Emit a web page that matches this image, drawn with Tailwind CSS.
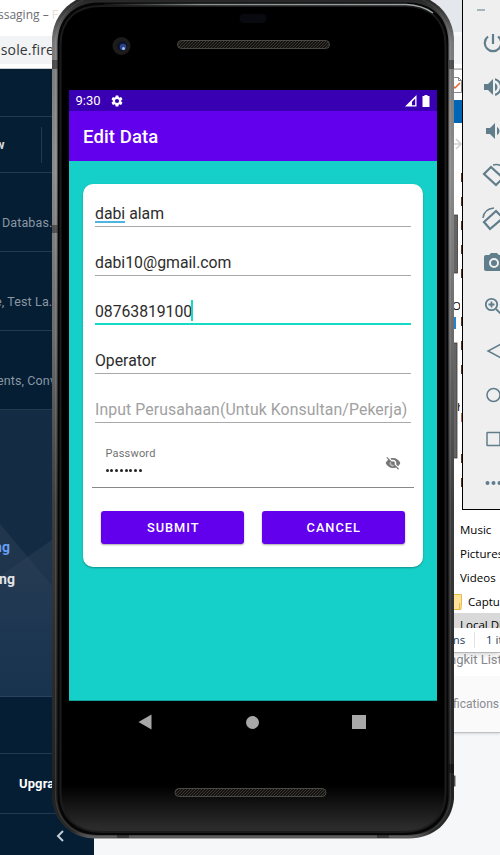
<!DOCTYPE html>
<html lang="id">
<head>
<meta charset="utf-8">
<title>Edit Data</title>
<script src="https://cdn.jsdelivr.net/npm/@tailwindcss/browser@4"></script>
</head>
<body class="w-[500px] h-[855px] overflow-hidden">
<main class="relative w-[500px] h-[855px] overflow-hidden bg-[#f6f7f9] font-['Roboto',sans-serif]">

  <!-- Browser window -->
  <section class="absolute inset-0 flex flex-col">
    <div class="h-9 flex">
      <div class="w-[80px] flex items-center bg-white text-[12px] text-[#6b6e73] font-['Open_Sans',sans-serif] whitespace-nowrap overflow-hidden"><span class="-ml-[2px] -mt-[6px]">ssaging – <span class="text-[#e6dcd6]">F</span></span></div>
      <div class="flex-1 h-8 bg-[#e4e7eb]"></div>
    </div>
    <div class="h-7 bg-[#f1f3f4] flex items-center text-[14px] text-[#35363a] font-['Open_Sans',sans-serif] overflow-hidden"><span class="-ml-[8px] -mt-px tracking-[.15px]">nsole.firebase</span></div>
    <div class="h-[5px] bg-white border-b border-[#c8cacc]"></div>
    <div class="flex-1 flex min-h-0">
      <aside class="w-[94px] flex flex-col bg-[#051e34] text-[12.500px] tracking-[.12px] text-[#8a97a3] whitespace-nowrap overflow-hidden">
        <div class="h-[48px] border-b border-[#23394d]"></div>
        <div class="h-[56px] flex items-center border-b border-[#23394d]"><span class="w-[41px] text-[13px] font-bold text-[#d5d9dd]"><span class="-ml-[5px]">w</span></span><span class="h-9 w-px bg-[#23394d]"></span></div>
        <div class="h-[79px] flex items-end pb-[18px] border-b border-[#23394d]"><span class="ml-[2px]">Databas…</span></div>
        <div class="h-[79px] flex items-end pb-[18px] border-b border-[#23394d]"><span class="-ml-[5px]">e, Test La…</span></div>
        <div class="h-[79px] flex items-end pb-[18px] border-b border-[#23394d]"><span class="-ml-[3px]">ents, Conversions</span></div>
        <div class="h-[287px] relative border-b border-[#2c455b] bg-[#142c43]">
          <svg class="absolute inset-0" width="94" height="287"><defs><linearGradient id="fade" x1="0" y1="110" x2="0" y2="287" gradientUnits="userSpaceOnUse"><stop offset="0" stop-color="#3c4c60" stop-opacity=".34"/><stop offset=".5" stop-color="#2c4360" stop-opacity=".3"/><stop offset="1" stop-color="#204060" stop-opacity=".2"/></linearGradient></defs><path d="M0 114L52 176V287H0z" fill="url(#fade)"/><path d="M52 130L0 166V287H52z" fill="url(#fade)"/></svg>
          <div class="relative pt-[127px] text-[14px] font-bold leading-[20px]"><div class="-ml-[6px] text-[#669df6]">ng</div><div class="mt-[12px] -ml-px text-[#e3e5e8]">ng</div></div>
        </div>
        <div class="h-[57px] border-b border-[#23394d]"></div>
        <div class="h-[60px] flex items-center pl-[19px] border-b border-[#23394d] text-[13px] font-bold text-white">Upgrade</div>
        <div class="flex-1 flex items-center pl-[56px]"><svg class="mt-[3px]" width="8" height="12" viewBox="0 0 8 12" fill="none" stroke="#c5cbd1" stroke-width="2"><path d="M7 1L2 6L7 11"/></svg></div>
      </aside>
      <div class="flex-1 flex flex-col items-end">
        <div class="mt-[540px] w-[60px] h-[124px] bg-white border-b border-[#bfc1c4] shadow-sm flex flex-col">
          <div class="h-[67px] pt-[43px] pl-[9px] text-[13px] leading-[16px] text-[#85888c] whitespace-nowrap overflow-hidden">ngkit List</div>
          <div class="flex-1 flex items-center pl-[13px] bg-[#fafafa] text-[12px] text-[#8a8c90] whitespace-nowrap overflow-hidden">fications</div>
        </div>
      </div>
    </div>
  </section>

  <!-- File explorer window -->
  <section class="absolute left-[440px] top-[69px] w-[60px] h-[584px] overflow-hidden bg-white border-y border-[#b4b6b9] shadow-md flex flex-col text-[11.500px] text-black font-['Open_Sans',sans-serif] whitespace-nowrap">
    <div class="h-[30px] pl-[13px] pt-[7px]"><svg width="10" height="16" viewBox="0 0 10 16" fill="none"><path d="M0 .5H5.500L8.500 3.500V15.500H0M5.500 .5V3.500H8.500" stroke="#85888c"/><path d="M0 9L2 11L7 6" stroke="#e8622a" stroke-width="1.500"/></svg></div>
    <div class="h-[23px] bg-[#0065b5]"></div>
    <div class="h-[42px] pl-[14px] pt-[15px]"><svg width="8" height="12" viewBox="0 0 8 12" fill="none" stroke="#cfcfcf" stroke-width="1.500"><path d="M0 6H7M2 1L7 6L2 11"/></svg></div>
    <div class="h-[286px] flex">
      <div class="w-[20px] pl-[12px] overflow-hidden">
        <div class="h-[130px]"></div>
        <div class="text-[11.500px] leading-[22px]">O</div>
        <div class="h-3 w-[3px] ml-px bg-[#2484ce]"></div>
        <div class="mt-[67px] ml-[5px] leading-[22px]">h</div>
      </div>
      <div class="w-[2px] flex flex-col gap-[15px] pt-[8px]">
        <i class="h-[9px] w-px ml-px bg-[#623019]"></i><i class="h-[9px] w-px ml-px bg-[#623019]"></i><i class="h-[9px] w-px ml-px bg-[#623019]"></i><i class="h-[9px] w-px ml-px bg-[#623019]"></i><i class="h-[9px] w-px ml-px bg-[#623019]"></i>
        <i class="h-[9px] w-px ml-px mt-[24px] bg-[#623019]"></i><i class="h-[9px] w-px ml-px bg-[#623019]"></i><i class="h-[9px] w-px ml-px bg-[#623019]"></i><i class="h-[9px] w-px ml-px mt-[24px] bg-[#b56a55]"></i>
      </div>
    </div>
    <div class="h-[66px] flex flex-col gap-[15px] pt-[3px] pl-[20px]"><i class="h-[9px] w-[2px] ml-px bg-[#623019]"></i><i class="h-[9px] w-[2px] ml-px bg-[#623019]"></i></div>
    <div class="h-6 flex items-center pl-5 pt-[2px]">Music</div>
    <div class="h-6 flex items-center pl-5 pt-[2px]">Pictures</div>
    <div class="h-6 flex items-center pl-5 pt-[2px]">Videos</div>
    <div class="h-6 flex items-center gap-[6px] pl-[13px] pt-[2px]"><svg class="shrink-0" width="9" height="16" viewBox="0 0 9 16"><path d="M0 .5H8.500V9L8 15.500H0z" fill="#ffe49a" stroke="#e6bd4b"/><path d="M6.500 9V15" stroke="#e6bd4b"/></svg>Capture</div>
    <div class="h-[15px] overflow-hidden bg-[#d9d9d9] pl-5 leading-[24px]">Local Disk</div>
    <div class="flex-1 flex items-center pl-[9px] text-[#1e395b]"><span class="w-[26px] shrink-0 h-4 leading-4 border-r border-[#e3e3e3]">ms</span><span class="pl-[11px]">1 item</span></div>
  </section>

  <!-- Device emulator -->
  <section class="absolute left-[52px] top-0 w-[406px] h-[840px]">
    <svg class="absolute left-0 top-0" width="406" height="840" viewBox="0 0 406 840">
      <defs>
        <linearGradient id="metal" x1="0" y1="0" x2="0" y2="840" gradientUnits="userSpaceOnUse"><stop offset="0" stop-color="#272727"/><stop offset=".05" stop-color="#797979"/><stop offset=".2" stop-color="#8b8b8b"/><stop offset=".4" stop-color="#6b6b6b"/><stop offset=".6" stop-color="#3d3d3d"/><stop offset=".94" stop-color="#202020"/><stop offset=".99" stop-color="#2a2a2a"/><stop offset="1" stop-color="#6a6a6a"/></linearGradient>
        <linearGradient id="glass" x1="0" y1="0" x2="0" y2="840" gradientUnits="userSpaceOnUse"><stop offset="0" stop-color="#000"/><stop offset=".935" stop-color="#000"/><stop offset=".985" stop-color="#2b2b2b"/></linearGradient>
        <linearGradient id="shine"><stop offset="0" stop-color="#111"/><stop offset=".3" stop-color="#8b9192"/><stop offset="1" stop-color="#a0a7a8"/></linearGradient>
        <pattern id="mesh" width="3" height="3" patternUnits="userSpaceOnUse"><rect width="3" height="3" fill="#15130f"/><path d="M0 3L3 0" stroke="#393733"/></pattern>
      </defs>
      <g fill="#646464" stroke="#3a3a3a" stroke-width=".8"><rect x="401" y="215" width="4.500" height="58"/><rect x="401" y="343" width="4" height="115"/><rect x="401" y="776" width="2" height="10"/></g>
      <path d="M0 38C1 20 12 5 28 -2H374C390 5 401 20 402 38V799C400 822 382 838.500 357 838.500H43C20 838.500 2 822 0 799z" fill="url(#metal)"/>
      <path d="M3.500 42C4 22 16 5 34 -1H368C386 5 398 22 398.500 42V796C398 820 380 836.500 355 836.500H45C22 836.500 4 820 3.500 796z" fill="none" stroke="#fff" stroke-opacity=".1"/>
      <path d="M5.500 44C5.500 18 22 3 46 2.500H356C381 3 396.500 18 396.500 44V796C396.500 820 379 835 354 835H46C22 835 5.500 820 5.500 796z" fill="#060606"/>
      <path d="M8.500 45C8.500 20 24 6 49 6H353C378 6 393.500 20 393.500 45V794C393.500 817 377 832 352 832H49C24 832 8.500 817 8.500 794z" fill="url(#glass)" stroke="#1c1c1c" stroke-width="2"/>
      <path d="M52 4.500H354Q370 5 381 13" fill="none" stroke="url(#shine)" stroke-width="1.500"/>
      <path d="M0 60H5.500V69H0zM397 60H402V69H397zM0 225H5.500V233H0zM397 764H402V773H397zM65 835H77V838H65zM325 835H337V838H325z" fill="#000" fill-opacity=".38"/>
      <circle cx="69.500" cy="46" r="9" fill="#1d1c1b"/><circle cx="70" cy="46" r="5" fill="#0c132b"/><circle cx="71" cy="47" r="3.200" fill="#2c448c"/><circle cx="71.500" cy="48.500" r="1.500" fill="#aabce9"/>
      <rect x="187.500" y="14" width="27" height="9" rx="4.500" fill="#090a0f"/>
      <rect x="125.500" y="40.500" width="152" height="8" rx="4" fill="url(#mesh)" stroke="#4c4945"/>
      <rect x="123" y="788.500" width="151" height="8" rx="4" fill="url(#mesh)" stroke="#4c4945"/>
    </svg>

    <div class="relative ml-[17px] pt-[90px] w-[368px] flex flex-col">
      <div class="h-[21px] bg-[#3800b2] flex items-center pl-[7px] pr-[7px] text-white">
        <span class="text-[13px] -ml-[.5px]">9:30</span>
        <svg class="ml-[9px]" width="14" height="14" viewBox="0 0 24 24" fill="#fff"><path d="M19.140 12.940c.04-.3.060-.61.060-.94s-.02-.64-.07-.94l2.030-1.580a.49.49 0 0 0 .12-.61l-1.920-3.320a.49.49 0 0 0-.59-.22l-2.390.96a7 7 0 0 0-1.620-.94l-.36-2.540a.48.48 0 0 0-.48-.41h-3.840a.48.48 0 0 0-.47.41l-.36 2.540c-.59.24-1.130.57-1.620.94l-2.390-.96a.49.49 0 0 0-.59.22L2.740 8.870a.48.48 0 0 0 .12.61l2.030 1.580a7.600 7.600 0 0 0 0 1.880l-2.030 1.580a.49.49 0 0 0-.12.61l1.920 3.320c.12.22.37.29.59.22l2.390-.96c.5.38 1.030.7 1.620.94l.36 2.540c.05.24.24.41.48.41h3.840c.24 0 .44-.17.47-.41l.36-2.540a7 7 0 0 0 1.620-.94l2.390.96c.22.08.47 0 .59-.22l1.920-3.320a.48.48 0 0 0-.12-.61zM12 15.600a3.600 3.600 0 1 1 0-7.200 3.600 3.600 0 0 1 0 7.200z"/></svg>
        <svg class="ml-auto" width="12" height="12" viewBox="0 0 12 12"><path fill-rule="evenodd" d="M0 11.500L11.500 0V11.500zM7 10.200H10.200V3.500L7 6.700z" fill="#fff"/></svg>
        <svg class="ml-[5px]" width="8" height="12" viewBox="0 0 8 12"><path d="M2.500 0H5.500V1H7.500V12H.5V1H2.500z" fill="#fff"/></svg>
      </div>
      <div class="h-[50px] bg-[#6200ee] flex items-center pl-[14px] pt-[3px] text-[18.500px] tracking-[.12px] font-medium text-white">Edit Data</div>
      <div class="h-[540px] bg-[#15d0c8] border-b border-[#10a39d] pt-[23px] pl-[13.500px] pr-[14.500px]">
        <form class="h-[383px] w-[340px] rounded-[10px] bg-white shadow-[0_1px_2px_rgba(0,0,0,.3)] flex flex-col text-[15.800px] leading-[20px] text-[#2c2c2c]">
          <div class="mx-[12px] h-[43px] pt-[20px] border-b border-[#a9a9a9] pl-[.5px]"><span class="relative">dabi<span class="absolute left-0 top-[17px] h-[2px] w-full bg-[#4db5e2]"></span></span> alam</div>
          <div class="mx-[12px] h-[49px] pt-[26px] border-b border-[#a9a9a9] pl-[.5px]">dabi10@gmail.com</div>
          <div class="mx-[12px] h-[49px] pt-[24px] border-b-2 border-[#14dac6] pl-[.5px] flex"><span class="pt-[2px] tracking-[-.05px]">08763819100</span><span class="w-[2px] -ml-px h-[21px] bg-[#14dac6]"></span></div>
          <div class="mx-[12px] h-[49px] pt-[26px] border-b border-[#a9a9a9] pl-[.5px]">Operator</div>
          <div class="mx-[12px] h-[49px] pt-[26px] border-b border-[#a9a9a9] pl-[.5px] tracking-[.1px] text-[#a1a1a1] whitespace-nowrap">Input Perusahaan(Untuk Konsultan/Pekerja)</div>
          <div class="mx-[9px] h-[65px] border-b border-[#898989] flex justify-between pl-[14px] pr-[13px]">
            <div class="pt-[24px]"><div class="text-[11px] leading-[14px] tracking-[.18px] text-[#717171]">Password</div><div class="mt-[8px] flex gap-[1.800px]"><i class="size-[3px] rounded-full bg-[#222]"></i><i class="size-[3px] rounded-full bg-[#222]"></i><i class="size-[3px] rounded-full bg-[#222]"></i><i class="size-[3px] rounded-full bg-[#222]"></i><i class="size-[3px] rounded-full bg-[#222]"></i><i class="size-[3px] rounded-full bg-[#222]"></i><i class="size-[3px] rounded-full bg-[#222]"></i><i class="size-[3px] rounded-full bg-[#222]"></i></div></div>
            <svg class="mt-[32px]" width="16" height="16" viewBox="0 0 24 24" fill="#777"><path d="M12 7c2.760 0 5 2.240 5 5 0 .65-.13 1.260-.36 1.830l2.920 2.920c1.510-1.260 2.700-2.890 3.430-4.750-1.730-4.390-6-7.500-11-7.500-1.400 0-2.740.25-3.980.7l2.160 2.160C10.740 7.130 11.350 7 12 7zM2 4.270l2.280 2.280.46.46C3.080 8.300 1.780 10.020 1 12c1.730 4.390 6 7.500 11 7.500 1.550 0 3.030-.3 4.380-.84l.42.42L19.730 22 21 20.730 3.270 3 2 4.270z"/><path d="M7.500 9.700a5 5 0 0 0 6.700 6.800z" fill="#bbb"/><circle cx="12" cy="12" r="2.800"/></svg>
          </div>
          <div class="flex gap-[18px] px-[18px] pt-[23px] text-[12.800px] font-medium tracking-[1px] text-white">
            <button type="button" class="flex-1 h-[33px] pl-[2px] rounded-[3px] bg-[#6200ee] shadow-[0_1px_2px_rgba(0,0,0,.35)]">SUBMIT</button>
            <button type="button" class="flex-1 h-[33px] pl-px rounded-[3px] bg-[#6200ee] shadow-[0_1px_2px_rgba(0,0,0,.35)]">CANCEL</button>
          </div>
        </form>
      </div>
      <div class="h-[42px] flex items-center justify-between pl-[69px] pr-[71px]">
        <svg width="14" height="16" viewBox="0 0 14 16"><path d="M13.500 .5V15.500L.5 8z" fill="#a8a8a8"/></svg>
        <span class="size-[13px] rounded-full bg-[#a8a8a8]"></span>
        <span class="size-[14px] bg-[#a8a8a8]"></span>
      </div>
    </div>
  </section>

  <!-- Emulator toolbar, cut off by the screen edge -->
  <nav class="absolute left-[462px] top-0 w-[60px] h-[510px] bg-[#efefef] border-l border-b border-black">
    <div class="h-[21px] pl-[14px] pt-[9px]"><div class="w-2 h-[2px] bg-[#a7b5bc]"></div></div>
    <div class="flex flex-col pl-[19px] text-[#607d8b]">
      <div class="h-[44px] flex items-center"><svg class="-ml-px" width="24" height="24" viewBox="0 0 24 24" fill="none" stroke="currentColor" stroke-width="2.200"><path d="M12 3V13M7 5.500A8.200 8.200 0 1 0 17 5.500"/></svg></div>
      <div class="h-[44px] flex items-center"><svg class="-ml-px" width="24" height="24" viewBox="0 0 24 24" fill="currentColor"><path d="M3 9v6h4l5 5V4L7 9H3zm13.500 3c0-1.770-1.020-3.290-2.500-4.030v8.050c1.480-.73 2.500-2.250 2.500-4.020zM14 3.230v2.060c2.890.86 5 3.540 5 6.710s-2.110 5.850-5 6.710v2.060c4.010-.91 7-4.490 7-8.770s-2.990-7.860-7-8.770z"/></svg></div>
      <div class="h-[44px] flex items-center"><svg class="-ml-px" width="24" height="24" viewBox="0 0 24 24" fill="currentColor"><path d="M18.500 12c0-1.770-1.020-3.290-2.500-4.030v8.050c1.480-.73 2.500-2.250 2.500-4.020zM5 9v6h4l5 5V4L9 9H5z"/></svg></div>
      <div class="h-[44px] flex items-center"><svg width="24" height="24" viewBox="0 0 24 24" fill="none" stroke="currentColor" stroke-width="2.200"><path d="M9 4L2 11L14 22L21 15z"/><path d="M11 2Q18 0 22 6" stroke-width="1.500"/></svg></div>
      <div class="h-[44px] flex items-center"><svg width="24" height="24" viewBox="0 0 24 24" fill="none" stroke="currentColor" stroke-width="2.200"><path d="M14 4L2 15L8 22L21 11z"/><path d="M1 11Q2 2 12 1" stroke-width="1.500"/></svg></div>
      <div class="h-[44px] flex items-center"><svg width="24" height="24" viewBox="0 0 24 24"><path fill="currentColor" fill-rule="evenodd" d="M9 2L7.170 4H4a2 2 0 0 0-2 2v12a2 2 0 0 0 2 2h16a2 2 0 0 0 2-2V6a2 2 0 0 0-2-2h-3.170L15 2H9zm3 5a5 5 0 1 1 0 10 5 5 0 0 1 0-10zm0 2a3 3 0 1 0 0 6 3 3 0 0 0 0-6z"/></svg></div>
      <div class="h-[44px] flex items-center"><svg width="24" height="24" viewBox="0 0 24 24" fill="none" stroke="currentColor" stroke-width="1.800"><circle cx="9.500" cy="9.500" r="5.700"/><path d="M14 14L20 20M6.500 9.500H12.500M9.500 6.500V12.500"/></svg></div>
      <div class="h-[44px] flex items-center"><svg width="24" height="24" viewBox="0 0 24 24" fill="none" stroke="currentColor" stroke-width="1.500"><path d="M19 5L6 12L19 19z"/></svg></div>
      <div class="h-[44px] flex items-center"><svg width="24" height="24" viewBox="0 0 24 24" fill="none" stroke="currentColor" stroke-width="1.500"><circle cx="11.500" cy="12" r="6.500"/></svg></div>
      <div class="h-[44px] flex items-center"><svg width="24" height="24" viewBox="0 0 24 24" fill="none" stroke="currentColor" stroke-width="1.500"><rect x="5" y="5.500" width="13" height="13" rx=".5"/></svg></div>
      <div class="h-[44px] flex items-center"><svg width="24" height="24" viewBox="0 0 24 24" fill="currentColor"><circle cx="5.500" cy="12" r="2"/><circle cx="11.500" cy="12" r="2"/><circle cx="17.500" cy="12" r="2"/></svg></div>
    </div>
  </nav>
</main>
</body>
</html>
